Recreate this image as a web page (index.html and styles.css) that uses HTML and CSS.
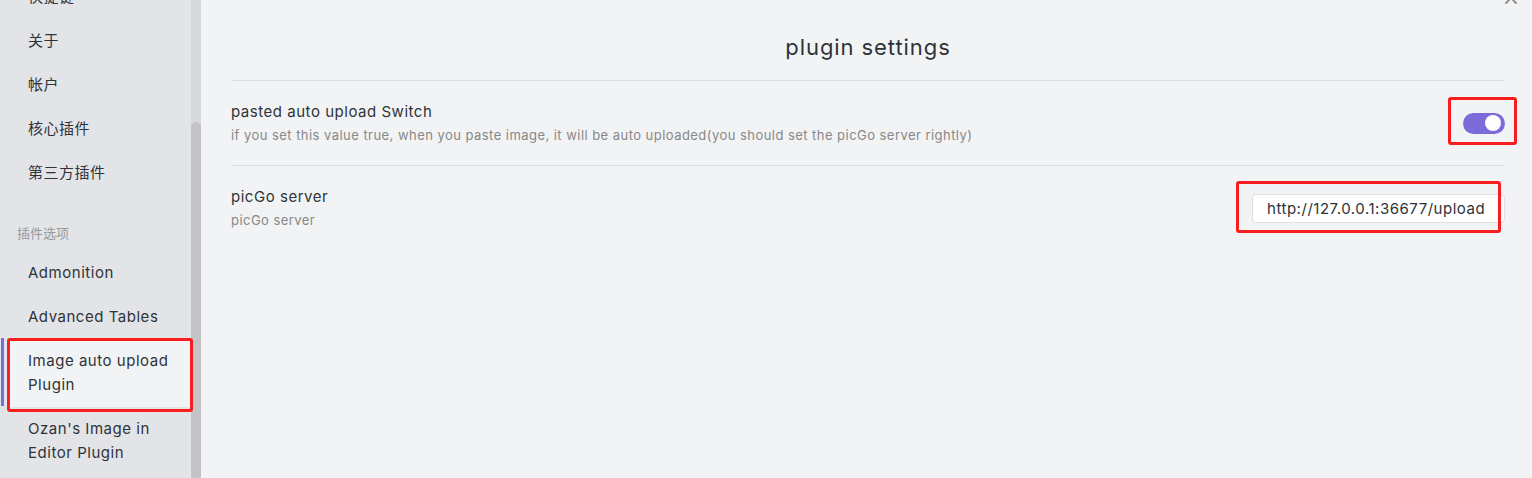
FILE: index.html
```html
<!DOCTYPE html>
<html lang="zh">
<head>
<meta charset="utf-8">
<title>plugin settings</title>
<link rel="stylesheet" href="styles.css">
</head>
<body>
<div class="app">
  <aside class="sidebar">
    <nav class="nav">
      <div class="nav-list">
        <div class="nav-item">快捷键</div>
        <div class="nav-item">关于</div>
        <div class="nav-item">帐户</div>
        <div class="nav-item">核心插件</div>
        <div class="nav-item">第三方插件</div>
        <div class="nav-group">插件选项</div>
        <div class="nav-item">Admonition</div>
        <div class="nav-item">Advanced Tables</div>
        <div class="nav-item active">Image auto upload Plugin<span class="annot annot-nav"></span></div>
        <div class="nav-item">Ozan's Image in Editor Plugin</div>
      </div>
    </nav>
    <div class="scrollbar"><div class="thumb"></div></div>
  </aside>
  <main class="content">
    <button class="close" aria-label="close">
      <svg width="14" height="14" viewBox="0 0 14 14"><path d="M2 2 L12 12 M12 2 L2 12" stroke="#8a8a8a" stroke-width="1.8" stroke-linecap="round" fill="none"/></svg>
    </button>
    <h2 class="title">plugin settings</h2>
    <div class="setting">
      <div class="info">
        <div class="name">pasted auto upload Switch</div>
        <div class="desc">if you set this value true, when you paste image, it will be auto uploaded(you should set the picGo server rightly)</div>
      </div>
      <div class="control">
        <div class="toggle"><span class="knob"></span></div>
        <span class="annot annot-toggle"></span>
      </div>
    </div>
    <div class="setting">
      <div class="info">
        <div class="name">picGo server</div>
        <div class="desc">picGo server</div>
      </div>
      <div class="control">
        <input class="text-input" type="text" value="http://127.0.0.1:36677/upload">
        <span class="annot annot-input"></span>
      </div>
    </div>
  </main>
</div>
</body>
</html>
```
FILE: styles.css
```css
* { box-sizing: border-box; }
html, body {
  margin: 0;
  padding: 0;
  width: 1532px;
  height: 478px;
  overflow: hidden;
  font-family: Inter, "Noto Sans CJK SC", sans-serif;
  color: #2e3338;
  background: #f2f3f5;
}
.app {
  display: flex;
  height: 478px;
}
.sidebar {
  position: relative;
  display: flex;
  width: 201px;
  flex: none;
  background: #e3e4e8;
  overflow: hidden;
}
.nav {
  width: 191px;
  flex: none;
}
.nav-list {
  margin-top: -25px;
  display: flex;
  flex-direction: column;
}
.nav-item {
  position: relative;
  padding: 10px 12px 10px 28px;
  font-size: 15px;
  line-height: 24px;
  letter-spacing: 0.035em;
  color: #2e3338;
}
.nav-item.active {
  margin-left: 8px;
  padding-left: 20px;
  background: #f2f3f5;
}
.nav-item.active::before {
  content: "";
  position: absolute;
  left: -7px;
  top: -1px;
  width: 3px;
  height: 68px;
  background: #7b6cd9;
}
.nav-group {
  padding: 28px 0 8px 17px;
  font-size: 13px;
  line-height: 20px;
  color: #999;
}
.scrollbar {
  width: 10px;
  flex: none;
  background: #d8d9dc;
  padding-top: 122px;
}
.thumb {
  height: 400px;
  background: #c4c4c6;
  border-radius: 5px 5px 0 0;
}
.annot {
  position: absolute;
  border: 3px solid #f81e1e;
  border-radius: 3px;
  z-index: 5;
  pointer-events: none;
}
.annot-nav {
  left: -1px;
  right: -2px;
  top: -1px;
  bottom: -5px;
}
.content {
  position: relative;
  flex: 1;
  padding: 32px 27px 0 30px;
  background: #f2f3f5;
}
.close {
  position: absolute;
  top: -9px;
  right: 14px;
  border: 0;
  padding: 0;
  background: none;
  width: 14px;
  height: 14px;
}
.close svg { display: block; }
.title {
  margin: 0 0 18px;
  text-align: center;
  font-size: 22px;
  line-height: 30px;
  font-weight: 400;
  letter-spacing: 0.042em;
  color: #2e3338;
}
.setting {
  display: flex;
  align-items: center;
  justify-content: space-between;
  border-top: 1px solid #dcdde0;
  padding: 20px 0 20px;
}
.name {
  font-size: 15px;
  line-height: 22px;
  letter-spacing: 0.035em;
  color: #2e3338;
}
.desc {
  margin-top: 2px;
  font-size: 13px;
  line-height: 20px;
  letter-spacing: 0.035em;
  color: #888;
}
.control {
  position: relative;
  display: flex;
  align-items: center;
}
.toggle {
  width: 42px;
  height: 21px;
  border-radius: 11px;
  background: #7b6cd9;
  display: flex;
  align-items: center;
  justify-content: flex-end;
  padding-right: 4px;
}
.knob {
  width: 16px;
  height: 16px;
  border-radius: 50%;
  background: #fff;
}
.annot-toggle {
  left: -15px;
  right: -12px;
  top: -16px;
  bottom: -11px;
}
.text-input {
  width: 253px;
  height: 29px;
  border: 1px solid #e0e0e3;
  border-radius: 4px;
  background: #fff;
  padding: 0 10px 0 14px;
  font-family: Inter, sans-serif;
  font-size: 15px;
  letter-spacing: 0.035em;
  color: #2e3338;
  outline: none;
}
.annot-input {
  left: -16px;
  right: 4px;
  top: -13px;
  bottom: -10px;
}
```
